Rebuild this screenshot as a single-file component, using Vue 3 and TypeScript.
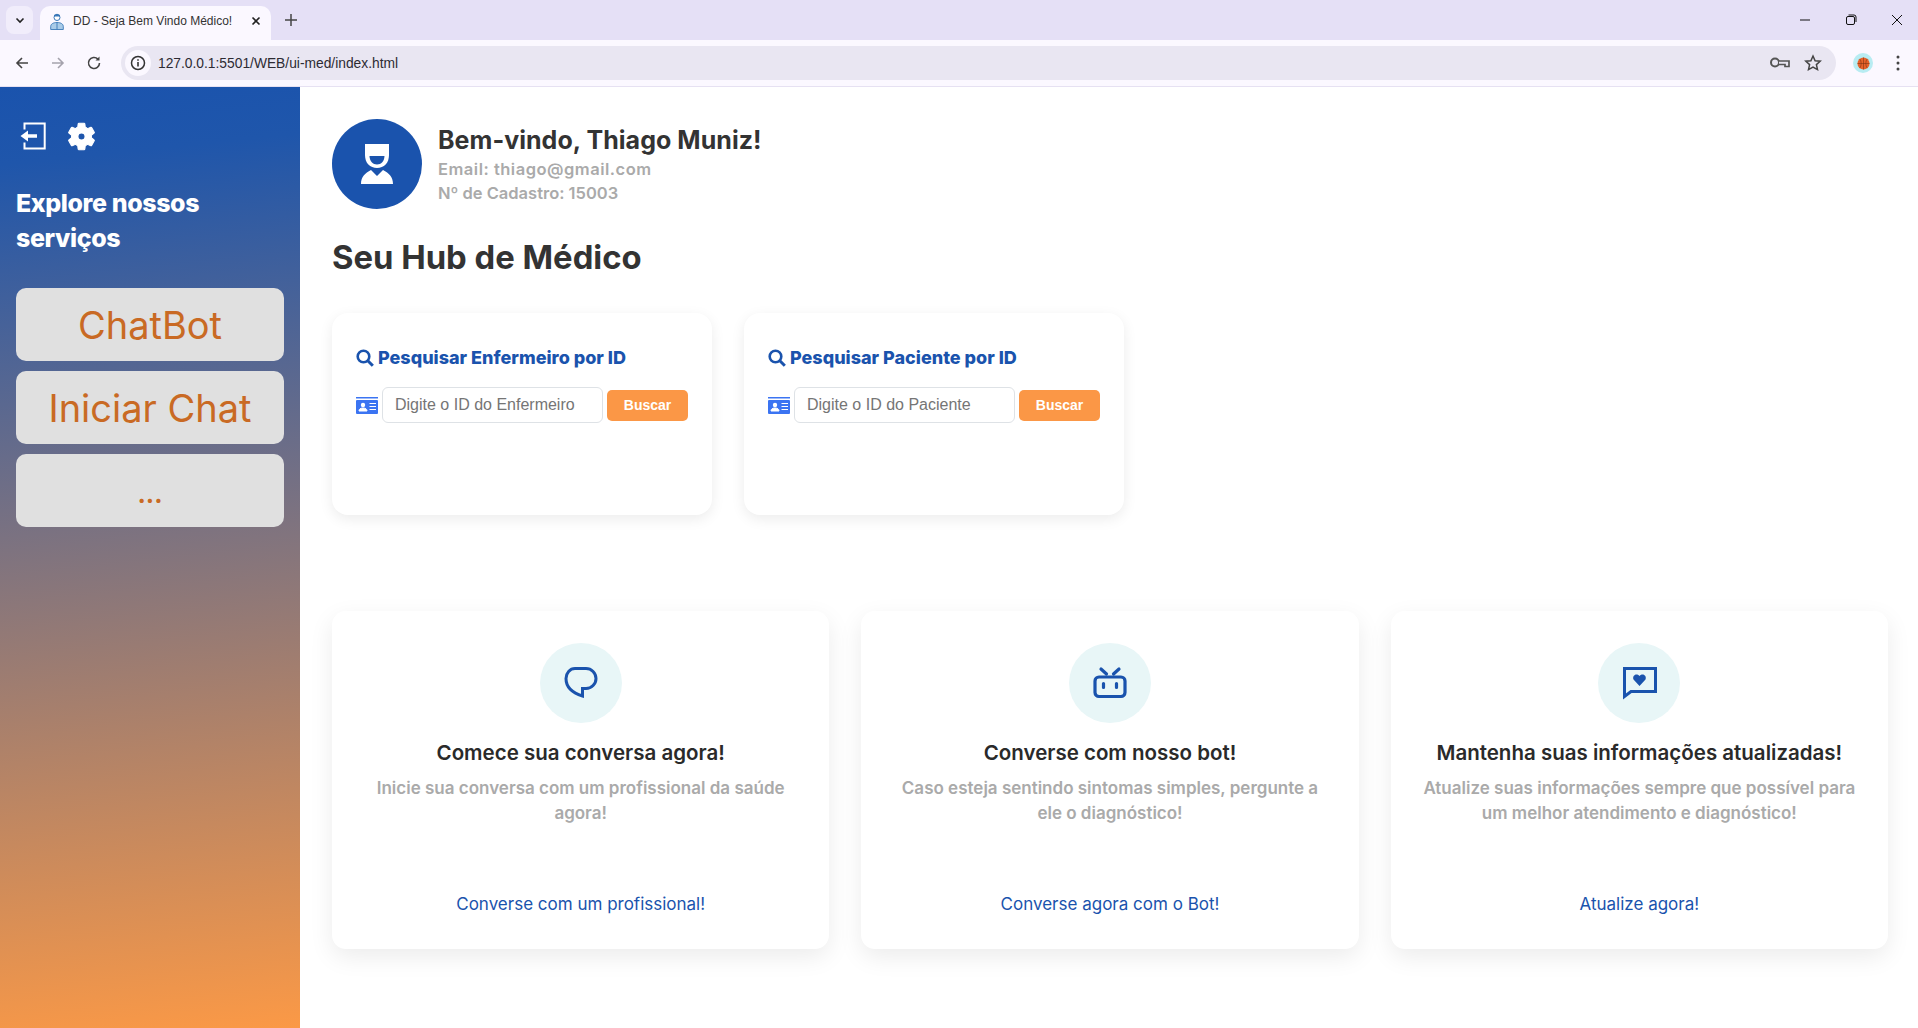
<script setup lang="ts">
const searches = [
  { id: 'enf', title: 'Pesquisar Enfermeiro por ID', placeholder: 'Digite o ID do Enfermeiro' },
  { id: 'pac', title: 'Pesquisar Paciente por ID', placeholder: 'Digite o ID do Paciente' }
]

const features = [
  {
    icon: 'bubble',
    title: 'Comece sua conversa agora!',
    text: 'Inicie sua conversa com um profissional da saúde agora!',
    link: 'Converse com um profissional!'
  },
  {
    icon: 'bot',
    title: 'Converse com nosso bot!',
    text: 'Caso esteja sentindo sintomas simples, pergunte a ele o diagnóstico!',
    link: 'Converse agora com o Bot!'
  },
  {
    icon: 'heart',
    title: 'Mantenha suas informações atualizadas!',
    text: 'Atualize suas informações sempre que possível para um melhor atendimento e diagnóstico!',
    link: 'Atualize agora!'
  }
]

const services = ['ChatBot', 'Iniciar Chat', '...']
</script>

<template>
  <div class="window">
    <div class="tabstrip">
      <div class="tab-list">
        <svg width="12" height="12" viewBox="0 0 12 12"><path d="M2.5 4.5 6 8l3.5-3.5" fill="none" stroke="#222" stroke-width="1.6" /></svg>
      </div>
      <div class="tab">
        <svg class="favicon" width="14" height="17" viewBox="0 0 14 17">
          <circle cx="7" cy="4.500" r="3" fill="#fff" stroke="#3a78b8" stroke-width="1" />
          <path d="M4 3.500h6V2L7 .7 4 2Z" fill="#3a78b8" />
          <path d="M.7 16.500v-3c0-2.500 2.500-4 6.300-4s6.300 1.500 6.300 4v3Z" fill="#a9cbe8" stroke="#3a78b8" stroke-width=".9" />
          <path d="M7 9.500v7" stroke="#3a78b8" stroke-width=".9" />
        </svg>
        <span class="tab-title">DD - Seja Bem Vindo Médico!</span>
        <svg class="tab-close" width="10" height="10" viewBox="0 0 10 10"><path d="m1.500 1.500 7 7m0-7-7 7" stroke="#222" stroke-width="1.600" /></svg>
      </div>
      <svg class="new-tab" width="14" height="14" viewBox="0 0 14 14"><path d="M7 1v12M1 7h12" stroke="#444" stroke-width="1.500" /></svg>
      <div class="win-btns">
        <svg width="12" height="12" viewBox="0 0 12 12"><path d="M1 6h10" stroke="#111" stroke-width="1" /></svg>
        <svg width="12" height="12" viewBox="0 0 12 12"><rect x="1.500" y="2.500" width="8" height="8" rx="1.500" fill="none" stroke="#111" /><path d="M3.500 1h5.500a2 2 0 0 1 2 2v5" fill="none" stroke="#111" /></svg>
        <svg width="12" height="12" viewBox="0 0 12 12"><path d="m1 1 10 10m0-10L1 11" stroke="#111" /></svg>
      </div>
    </div>

    <div class="toolbar">
      <svg width="16" height="16" viewBox="0 0 16 16"><path d="M14 8H3m5-5L3 8l5 5" fill="none" stroke="#444" stroke-width="1.600" /></svg>
      <svg width="16" height="16" viewBox="0 0 16 16"><path d="M2 8h11M8 3l5 5-5 5" fill="none" stroke="#a5a3ad" stroke-width="1.600" /></svg>
      <svg width="16" height="16" viewBox="0 0 16 16"><path d="M13.500 8a5.500 5.500 0 1 1-1.600-3.900" fill="none" stroke="#444" stroke-width="1.600" /><path d="M13.500 1.500v4h-4Z" fill="#444" /></svg>
      <div class="omnibox">
        <span class="chip">
          <svg width="16" height="16" viewBox="0 0 16 16"><circle cx="8" cy="8" r="6.500" fill="none" stroke="#333" stroke-width="1.500" /><path d="M8 7v4.500M8 4.300v1.500" stroke="#333" stroke-width="1.600" /></svg>
        </span>
        <span class="url">127.0.0.1:5501/WEB/ui-med/index.html</span>
        <svg class="key" width="20" height="12" viewBox="0 0 20 12"><circle cx="5" cy="5.500" r="4" fill="none" stroke="#555" stroke-width="2" /><path d="M9 4h10v5.500h-4V7.500H9" fill="#e9e6f2" stroke="#555" stroke-width="1.700" /></svg>
        <svg class="star" width="18" height="18" viewBox="0 0 18 18"><path d="m9 2 2.100 4.700 5.100.5-3.800 3.400 1.100 5L9 13l-4.500 2.600 1.100-5L1.800 7.200l5.100-.5Z" fill="none" stroke="#444" stroke-width="1.500" /></svg>
      </div>
      <span class="profile">
        <svg width="13" height="13" viewBox="0 0 14 14"><circle cx="7" cy="7" r="6.500" fill="#e8622a" /><path d="M7 .5v13M.5 7h13M3 2c2 2.500 2 7.500 0 10M11 2c-2 2.500-2 7.500 0 10" fill="none" stroke="#7a3010" stroke-width=".6" /></svg>
      </span>
      <svg class="dots" width="4" height="16" viewBox="0 0 4 16"><circle cx="2" cy="2" r="1.500" fill="#444" /><circle cx="2" cy="8" r="1.500" fill="#444" /><circle cx="2" cy="14" r="1.500" fill="#444" /></svg>
    </div>

    <div class="page">
      <aside class="sidebar">
        <div class="side-icons">
          <svg width="26" height="28" viewBox="0 0 26 28">
            <path d="M4.500 7.500V1.500H24.700V26.500H4.500V20.500" fill="none" stroke="#fff" stroke-width="2" />
            <path d="M.5 14 8 8.500v3.700H17v3.600H8v3.700Z" fill="#fff" />
          </svg>
          <svg width="33" height="33" viewBox="0 0 24 24">
            <path fill="#fff" stroke="#fff" stroke-width=".8" fill-rule="evenodd" d="M19.140 12.940c.04-.3.06-.61.06-.94 0-.32-.02-.64-.07-.94l2.030-1.580c.18-.14.23-.41.12-.61l-1.920-3.320c-.12-.22-.37-.29-.59-.22l-2.390.96c-.5-.38-1.030-.7-1.620-.94l-.36-2.540c-.04-.24-.24-.41-.48-.41h-3.840c-.24 0-.43.17-.47.41l-.36 2.540c-.59.24-1.130.57-1.620.94l-2.390-.96c-.22-.08-.47 0-.59.22L2.740 8.870c-.12.21-.08.47.12.61l2.030 1.580c-.05.3-.09.63-.09.94s.02.64.07.94l-2.030 1.580c-.18.14-.23.41-.12.61l1.920 3.320c.12.22.37.29.59.22l2.390-.96c.5.38 1.030.7 1.620.94l.36 2.540c.05.24.24.41.48.41h3.840c.24 0 .44-.17.47-.41l.36-2.540c.59-.24 1.130-.56 1.620-.94l2.390.96c.22.08.47 0 .59-.22l1.920-3.320c.12-.22.07-.47-.12-.61l-2.010-1.580zM12 14.600c-1.430 0-2.600-1.170-2.600-2.600s1.170-2.600 2.600-2.600 2.600 1.170 2.600 2.600-1.170 2.600-2.600 2.600z" />
          </svg>
        </div>
        <h2 class="side-title">Explore nossos serviços</h2>
        <button v-for="s in services" :key="s" class="side-btn" :class="{ 'side-more': s === '...' }">{{ s }}</button>
      </aside>

      <main class="content">
        <header class="profile-head">
          <div class="avatar">
            <svg width="90" height="90" viewBox="0 0 90 90">
              <path d="M33 25H57V36C57 44 52 49 45 49S33 44 33 36Z" fill="#fff" />
              <path d="M37.500 37H52.500C52.500 42 49 45.500 45 45.500S37.500 42 37.500 37Z" fill="#1a53ad" />
              <path d="M29 65C29 58 33 54 39 51L45 57 51 51C57 54 61 58 61 65Z" fill="#fff" />
            </svg>
          </div>
          <div class="profile-info">
            <h1>Bem-vindo, Thiago Muniz!</h1>
            <p class="email">Email: thiago@gmail.com</p>
            <p>Nº de Cadastro: 15003</p>
          </div>
        </header>

        <h2 class="hub-title">Seu Hub de Médico</h2>

        <section class="search-row">
          <div v-for="item in searches" :key="item.id" class="search-card">
            <h3>
              <svg width="18" height="18" viewBox="0 0 18 18"><circle cx="7.500" cy="7.500" r="5.800" fill="none" stroke="#1a53ad" stroke-width="2.600" /><path d="m11.800 11.800 5 5" stroke="#1a53ad" stroke-width="3" /></svg>
              {{ item.title }}
            </h3>
            <div class="search-form">
              <svg width="22" height="17" viewBox="0 0 22 17">
                <path d="M0 0h22v1.500H0Z" fill="#3b74f2" />
                <path fill="#3b74f2" fill-rule="evenodd" d="M1 3h20a1 1 0 0 1 1 1v12a1 1 0 0 1-1 1H1a1 1 0 0 1-1-1V4a1 1 0 0 1 1-1Z" />
                <circle cx="7" cy="8" r="2.200" fill="#fff" />
                <path d="M3 14c0-2 1.500-3 4-3s4 1 4 3ZM13.500 6.500H20M13.500 9.500H20M13.500 12.500H20" fill="#fff" stroke="#fff" stroke-width="1" />
              </svg>
              <input type="text" :placeholder="item.placeholder" />
              <button>Buscar</button>
            </div>
          </div>
        </section>

        <section class="feature-row">
          <article v-for="f in features" :key="f.icon" class="feature-card">
            <div class="feature-icon">
              <svg v-if="f.icon === 'bubble'" width="36" height="36" viewBox="0 0 36 36">
                <path d="M12 3.500H23C28.500 3.500 33 8 33 13.500S28.500 23.500 23 23.500H19.500V31C13 29 3 24.500 3 13.500 3 8 7 3.500 12 3.500Z" fill="none" stroke="#1a53ad" stroke-width="3" />
              </svg>
              <svg v-else-if="f.icon === 'bot'" width="36" height="36" viewBox="0 0 36 36">
                <rect x="3" y="12" width="30" height="19.500" rx="4" fill="none" stroke="#1a53ad" stroke-width="3.200" />
                <path d="m9 4 5.500 5M27 4l-5.500 5M11.500 18.500v4M24.500 18.500v4" stroke="#1a53ad" stroke-width="3.200" stroke-linecap="round" fill="none" />
              </svg>
              <svg v-else width="36" height="36" viewBox="0 0 36 36">
                <path d="M3.500 3.500H34.500V26.500H10L3.500 31.500Z" fill="none" stroke="#1a53ad" stroke-width="3" />
                <path d="M18.500 21 12.500 14.500C11 11 15 7.500 18.500 11 22 7.500 26 11 24.500 14.500Z" fill="#1a53ad" />
              </svg>
            </div>
            <h3>{{ f.title }}</h3>
            <p>{{ f.text }}</p>
            <a href="#" @click.prevent>{{ f.link }}</a>
          </article>
        </section>
      </main>
    </div>
  </div>
</template>

<style>
html, body {
  margin: 0;
  background: #fff;
  overflow: hidden;
}
</style>

<style scoped>
.window {
  width: 1918px;
  height: 1028px;
  display: flex;
  flex-direction: column;
  font-family: Inter, "Noto Sans", sans-serif;
  overflow: hidden;
}

/* browser chrome */
.tabstrip {
  height: 40px;
  background: #e5e0f6;
  display: flex;
  align-items: flex-end;
  padding-left: 6px;
  flex-shrink: 0;
}
.tab-list {
  width: 27px;
  height: 28px;
  margin-bottom: 6px;
  border-radius: 8px;
  background: #f1edfb;
  display: flex;
  align-items: center;
  justify-content: center;
}
.tab {
  width: 231px;
  height: 34px;
  margin-left: 7px;
  padding: 0 10px 4px;
  box-sizing: border-box;
  background: #fbf8ff;
  border-radius: 10px 10px 0 0;
  display: flex;
  align-items: center;
  font-family: "Liberation Sans", sans-serif;
}
.favicon { flex-shrink: 0; }
.tab-title {
  font-size: 12px;
  color: #333;
  margin-left: 9px;
  white-space: nowrap;
}
.tab-close { margin-left: auto; }
.new-tab { margin-left: 13px; align-self: center; }
.win-btns {
  margin-left: auto;
  align-self: flex-start;
  height: 40px;
  display: flex;
  align-items: center;
  gap: 34px;
  padding-right: 15px;
}
.toolbar {
  height: 46px;
  background: #fbf8ff;
  border-bottom: 1px solid #e6e1f2;
  display: flex;
  align-items: center;
  padding-left: 14px;
  gap: 20px;
  flex-shrink: 0;
}
.omnibox {
  width: 1715px;
  height: 34px;
  margin-left: -1px;
  border-radius: 17px;
  background: #e9e6f2;
  display: flex;
  align-items: center;
  font-family: "Liberation Sans", sans-serif;
}
.chip {
  width: 26px;
  height: 26px;
  margin-left: 4px;
  border-radius: 50%;
  background: #fbf8ff;
  display: flex;
  align-items: center;
  justify-content: center;
}
.url {
  font-size: 13.800px;
  color: #2d2b33;
  margin-left: 7px;
}
.key { margin-left: auto; }
.star { margin: 0 14px; }
.profile {
  width: 20px;
  height: 20px;
  margin-left: -3px;
  border-radius: 50%;
  background: #b8ecf2;
  display: flex;
  align-items: center;
  justify-content: center;
}
.dots { margin-left: 3px; }

/* page */
.page {
  flex: 1;
  display: flex;
  min-height: 0;
}
.sidebar {
  width: 300px;
  flex-shrink: 0;
  box-sizing: border-box;
  padding: 35px 16px 0;
  background: linear-gradient(174deg, #1a53ad 0%, #1f56ab 8%, #fb9946 100%);
}
.side-icons {
  display: flex;
  align-items: center;
  gap: 19px;
  padding-left: 4px;
  height: 28px;
}
.side-title {
  margin: 36px 0 32px;
  color: #fff;
  font-size: 25px;
  line-height: 35px;
  font-weight: 800;
  letter-spacing: -.4px;
  width: 240px;
}
.side-btn {
  display: block;
  width: 268px;
  height: 73px;
  margin-bottom: 10px;
  border: none;
  border-radius: 10px;
  background: #e0e0e0;
  color: #c96a24;
  font-family: inherit;
  font-size: 38px;
  font-weight: 400;
}
.side-more {
  padding-top: 8px;
  font-size: 25px;
  font-weight: 700;
}
.content {
  flex: 1;
  padding: 32px 30px 0 32px;
  min-width: 0;
}
.profile-head {
  display: flex;
  align-items: center;
  gap: 16px;
}
.avatar {
  width: 90px;
  height: 90px;
  border-radius: 50%;
  background: #1a53ad;
  flex-shrink: 0;
}
.profile-info h1 {
  margin: 0;
  font-size: 25px;
  line-height: 34px;
  font-weight: 700;
  letter-spacing: .05px;
  color: #333;
}
.profile-info p {
  margin: 0;
  font-size: 16.500px;
  line-height: 24px;
  font-weight: 600;
  color: #aaa;
}
.profile-info .email { letter-spacing: .5px; }
.hub-title {
  margin: 27px 0 35px;
  font-size: 32.800px;
  line-height: 42px;
  font-weight: 700;
  color: #333;
}
.search-row {
  display: flex;
  gap: 32px;
}
.search-card {
  width: 380px;
  height: 202px;
  box-sizing: border-box;
  padding: 32px 24px;
  background: #fff;
  border-radius: 16px;
  box-shadow: 0 4px 14px rgba(0, 0, 0, .08);
}
.search-card h3 {
  margin: 0 0 16px;
  display: flex;
  align-items: center;
  gap: 4px;
  font-size: 18px;
  line-height: 26px;
  font-weight: 800;
  color: #1a53ad;
}
.search-form {
  display: flex;
  align-items: center;
}
.search-form input {
  width: 221px;
  height: 36px;
  box-sizing: border-box;
  margin: 0 4px;
  padding: 0 12px;
  border: 1px solid #dee2e6;
  border-radius: 6px;
  font-family: "Liberation Sans", sans-serif;
  font-size: 16px;
  outline: none;
}
.search-form input::placeholder { color: #757575; }
.search-form button {
  width: 81px;
  height: 31px;
  border: none;
  border-radius: 5px;
  background: #fb9746;
  color: #fff;
  font-family: "Liberation Sans", sans-serif;
  font-size: 14px;
  font-weight: 700;
}
.feature-row {
  display: grid;
  grid-template-columns: repeat(3, 1fr);
  gap: 32px;
  margin-top: 96px;
}
.feature-card {
  height: 338px;
  box-sizing: border-box;
  padding: 32px 28px 0;
  background: #fff;
  border-radius: 14px;
  box-shadow: 0 8px 24px rgba(0, 0, 0, .08);
  display: flex;
  flex-direction: column;
  align-items: center;
  text-align: center;
}
.feature-icon {
  width: 82px;
  height: 80px;
  border-radius: 50%;
  background: #e8f6f7;
  display: flex;
  align-items: center;
  justify-content: center;
  flex-shrink: 0;
}
.feature-card h3 {
  margin: 16px 0 9px;
  font-size: 20.500px;
  line-height: 28px;
  font-weight: 600;
  color: #2a2a2a;
}
.feature-card p {
  margin: 0;
  height: 99px;
  font-size: 17px;
  line-height: 25px;
  font-weight: 600;
  color: #aaa;
}
.feature-card a {
  margin-top: 16px;
  font-size: 17px;
  line-height: 26px;
  color: #1a53ad;
  text-decoration: none;
}
</style>
